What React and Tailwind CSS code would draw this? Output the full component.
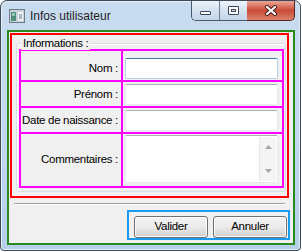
import React from 'react';

const AppIcon = () => (
  <svg width="16" height="14" viewBox="0 0 16 14">
    <rect x="0.5" y="0.5" width="15" height="13" fill="#c9d1d8" stroke="#6f7b86" />
    <rect x="2" y="3" width="5" height="9" fill="#4f8f7a" />
    <rect x="3" y="4" width="3" height="3" fill="#8fc5b3" />
    <rect x="9" y="3" width="5" height="9" fill="#eef2f5" />
    <rect x="10" y="5" width="3" height="5" fill="#a9b6c0" />
  </svg>
);

const CaptionButtons = () => (
  <div className="ml-auto mr-[5px] flex h-[20px]">
    <div className="flex rounded-bl-[5px] border border-t-0 border-r-0 border-[#4b5a6c] overflow-hidden">
      <div className="w-[28px] h-full flex items-center justify-center border-r border-[#6b7b8e] bg-gradient-to-b from-[#eef3f9] via-[#d5e2f0] to-[#c3d5ea]">
        <div className="mt-[4px] w-[11px] h-[4px] rounded-[1px] bg-white border border-[#3a4656]" />
      </div>
      <div className="w-[27px] h-full flex items-center justify-center bg-gradient-to-b from-[#eef3f9] via-[#d5e2f0] to-[#c3d5ea]">
        <div className="w-[11px] h-[9px] rounded-[1px] border border-[#3a4656] bg-white flex items-center justify-center">
          <div className="w-[5px] h-[3px] border border-[#3a4656] bg-[#dfe6ee]" />
        </div>
      </div>
    </div>
    <div className="w-[48px] h-full rounded-br-[5px] border border-t-0 border-l-0 border-[#5a2218] bg-gradient-to-b from-[#eba497] via-[#c84a34] to-[#d9826e] flex items-center justify-center">
      <svg width="14" height="11" viewBox="0 0 14 11">
        <path d="M3 2 L11 9 M11 2 L3 9" stroke="#3d1a12" strokeWidth="4" strokeLinecap="round" />
        <path d="M3 2 L11 9 M11 2 L3 9" stroke="#ffffff" strokeWidth="2.2" strokeLinecap="round" />
      </svg>
    </div>
  </div>
);

const Field = ({ focused }) => (
  <div
    className={
      'w-[153px] h-[21px] bg-white rounded-[2px] border ' +
      (focused
        ? 'border-[#b4d2e8] border-t-[#3d7bad]'
        : 'border-[#e3e9ef] border-t-[#abadb3]')
    }
  />
);

const Label = ({ children }) => (
  <div className="bg-[#f0f0f0] flex items-end justify-end pr-[3px] pb-[1px]">
    <span className="h-[21px] leading-[21px] whitespace-nowrap">{children}</span>
  </div>
);

const InputCell = ({ focused }) => (
  <div className="bg-[#f0f0f0] flex items-end pl-[2px] pb-[1px]">
    <Field focused={focused} />
  </div>
);

const Memo = () => (
  <div className="bg-[#f0f0f0] pl-[2px] pt-[1px]">
    <div className="w-[153px] h-[48px] bg-white rounded-[2px] border border-[#e3e9ef] border-t-[#abadb3] flex justify-end p-[1px]">
      <div className="w-[17px] h-full bg-[#f4f4f4] border-l border-[#e6e6e6] flex flex-col items-center justify-between py-[8px]">
        <svg width="7" height="4" viewBox="0 0 7 4">
          <path d="M0 4 L3.5 0 L7 4 Z" fill="#a8a8a8" />
        </svg>
        <svg width="7" height="4" viewBox="0 0 7 4">
          <path d="M0 0 L3.5 4 L7 0 Z" fill="#a8a8a8" />
        </svg>
      </div>
    </div>
  </div>
);

const Button = ({ children }) => (
  <div className="w-[74px] h-[22px] rounded-[3px] border border-[#707070] bg-gradient-to-b from-[#f2f2f2] via-[#ebebeb] to-[#cfcfcf] shadow-[inset_0_0_0_1px_#fcfcfc] flex items-center justify-center">
    {children}
  </div>
);

export default function App() {
  return (
    <div className="w-[302px] h-[252px] bg-white text-[11.5px] text-black font-['Liberation_Sans',Arial,sans-serif] tracking-[-0.3px]">
      <div className="w-[301px] h-[251px] flex flex-col rounded-t-[7px] rounded-b-[4px] border border-[#3e4a58] bg-gradient-to-b from-[#c8dcf0] via-[#c3d8ee] to-[#b5cfea] shadow-[inset_0_0_0_1px_#e6eff8]">
        <div className="h-[29px] flex items-start">
          <div className="ml-[8px] mt-[8px]">
            <AppIcon />
          </div>
          <span className="ml-[5px] mt-[7px] text-[12px] tracking-[0px] leading-[16px] text-[#1e1e1e]">Infos utilisateur</span>
          <CaptionButtons />
        </div>
        <div className="ml-[6px] w-[288px] h-[215px] border-2 border-[#2b8a1e] bg-[#f0f0f0]">
          <div className="ml-[1px] mt-[1px] w-[279px] h-[165px] border-2 border-[#ff0000]">
            <div className="relative ml-[4px] mt-[8px] w-[270px] h-[149px] rounded-[3px] border border-[#d5dfe5] shadow-[inset_1px_1px_0_#ffffff]">
              <span className="absolute left-[4px] -top-[8px] px-[2px] leading-[14px] bg-[#f0f0f0]">
                Informations :
              </span>
              <div className="ml-[2px] mt-[5px] w-[265px] h-[139px] grid grid-cols-[100px_159px] grid-rows-[29px_24px_24px_52px] gap-[2px] p-[2px] bg-[#ff00ff]">
                <Label>Nom :</Label>
                <InputCell focused />
                <Label>Prénom :</Label>
                <InputCell />
                <Label>Date de naissance :</Label>
                <InputCell />
                <div className="bg-[#f0f0f0] flex items-center justify-end pr-[3px] pb-[1px]">Commentaires :</div>
                <Memo />
              </div>
            </div>
          </div>
          <div className="ml-[5px] mt-[5px] w-[271px] border-t border-b border-t-[#a0a0a0] border-b-white" />
          <div className="ml-[118px] mt-[5px] w-[163px] h-[30px] border-2 border-[#1a9bf0] flex items-start pt-[4px] pl-[5px] gap-[5px]">
            <Button>Valider</Button>
            <Button>Annuler</Button>
          </div>
        </div>
      </div>
    </div>
  );
}
